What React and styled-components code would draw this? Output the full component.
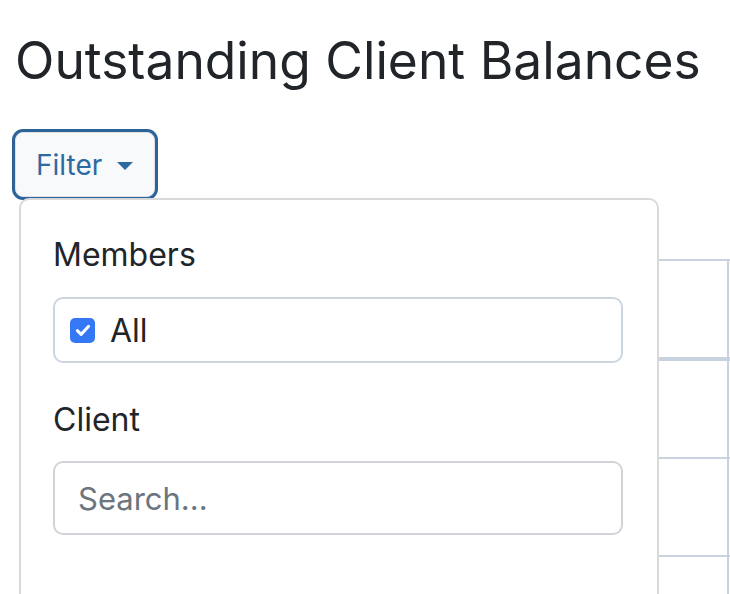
import React from "react";
import styled, { createGlobalStyle } from "styled-components";

const GlobalStyle = createGlobalStyle`
  html, body {
    margin: 0;
    padding: 0;
    background: #fff;
    overflow: hidden;
  }
  body {
    font-family: Inter, "Noto Sans", sans-serif;
    color: #212529;
  }
`;

const Page = styled.div`
  padding: 29px 0 0 15px;
  width: 730px;
  height: 594px;
  box-sizing: border-box;
  overflow: hidden;
`;

const Title = styled.h1`
  margin: 0;
  font-size: 51.5px;
  font-weight: 400;
  line-height: 62px;
  white-space: nowrap;
`;

const FilterWrap = styled.div`
  position: relative;
  margin-top: 41px;
  width: 140px;
  z-index: 2;
`;

const FilterButton = styled.button`
  display: flex;
  align-items: center;
  gap: 15px;
  width: 140px;
  height: 65px;
  padding: 0 0 0 20px;
  box-sizing: border-box;
  border: 1px solid #dee2e6;
  border-radius: 8px;
  background: #f8f9fa;
  color: #2d6aa1;
  font-family: Inter, sans-serif;
  font-size: 28px;
  box-shadow: 0 0 0 3px #2e6399;
  outline: none;
  cursor: pointer;
`;

const Caret = styled.span`
  width: 0;
  height: 0;
  border-left: 8px solid transparent;
  border-right: 8px solid transparent;
  border-top: 8px solid #2d6aa1;
  margin-top: 2px;
`;

const Menu = styled.div`
  position: absolute;
  top: 66px;
  left: 4px;
  width: 640px;
  height: 420px;
  box-sizing: border-box;
  background: #fff;
  border: 2px solid rgba(0, 0, 0, 0.15);
  border-radius: 10px;
  padding: 31px 32px 0 32px;
`;

const Label = styled.div`
  font-size: 32px;
  line-height: 48px;
  margin-bottom: ${(p) => p.$gap}px;
`;

const CheckBox = styled.label`
  display: flex;
  align-items: center;
  gap: 15px;
  width: 570px;
  height: 66px;
  box-sizing: border-box;
  padding-left: 15px;
  border: 2px solid #cdd5e0;
  border-radius: 10px;
  font-size: 32px;
  margin-bottom: 33px;
`;

const Check = styled.span`
  width: 25px;
  height: 25px;
  border-radius: 5px;
  background: #3478f6;
  display: flex;
  align-items: center;
  justify-content: center;
`;

const SearchInput = styled.input`
  display: block;
  width: 570px;
  height: 74px;
  box-sizing: border-box;
  border: 2px solid #d0d4d9;
  border-radius: 10px;
  padding: 0 23px;
  font-family: Inter, sans-serif;
  font-size: 31px;
  color: #212529;
  outline: none;
  &::placeholder {
    color: #6c757d;
  }
`;

const Table = styled.table`
  margin-top: 62px;
  margin-left: 4px;
  border-collapse: collapse;
  width: 800px;
  table-layout: fixed;
`;

const Cell = styled.td`
  border: 2px solid #c9d3df;
  border-bottom-width: ${(p) => (p.$head ? 4 : 2)}px;
  height: 96px;
  padding: 0;
`;

const rows = [true, false, false, false];

export default function App() {
  return (
    <>
      <GlobalStyle />
      <Page>
        <Title>Outstanding Client Balances</Title>
        <FilterWrap>
          <FilterButton>
            Filter <Caret />
          </FilterButton>
          <Menu>
            <Label $gap={18}>Members</Label>
            <CheckBox>
              <Check>
                <svg width="20" height="20" viewBox="0 0 16 16">
                  <path
                    d="M3.5 8.5l3 3 6-6.5"
                    fill="none"
                    stroke="#fff"
                    strokeWidth="2.4"
                    strokeLinecap="round"
                    strokeLinejoin="round"
                  />
                </svg>
              </Check>
              All
            </CheckBox>
            <Label $gap={17}>Client</Label>
            <SearchInput placeholder="Search..." />
          </Menu>
        </FilterWrap>
        <Table>
          <colgroup>
            <col style={{ width: 638 }} />
            <col style={{ width: 70 }} />
            <col />
          </colgroup>
          <tbody>
            {rows.map((head, i) => (
              <tr key={i}>
                <Cell $head={head} />
                <Cell $head={head} />
                <Cell $head={head} />
              </tr>
            ))}
          </tbody>
        </Table>
      </Page>
    </>
  );
}
